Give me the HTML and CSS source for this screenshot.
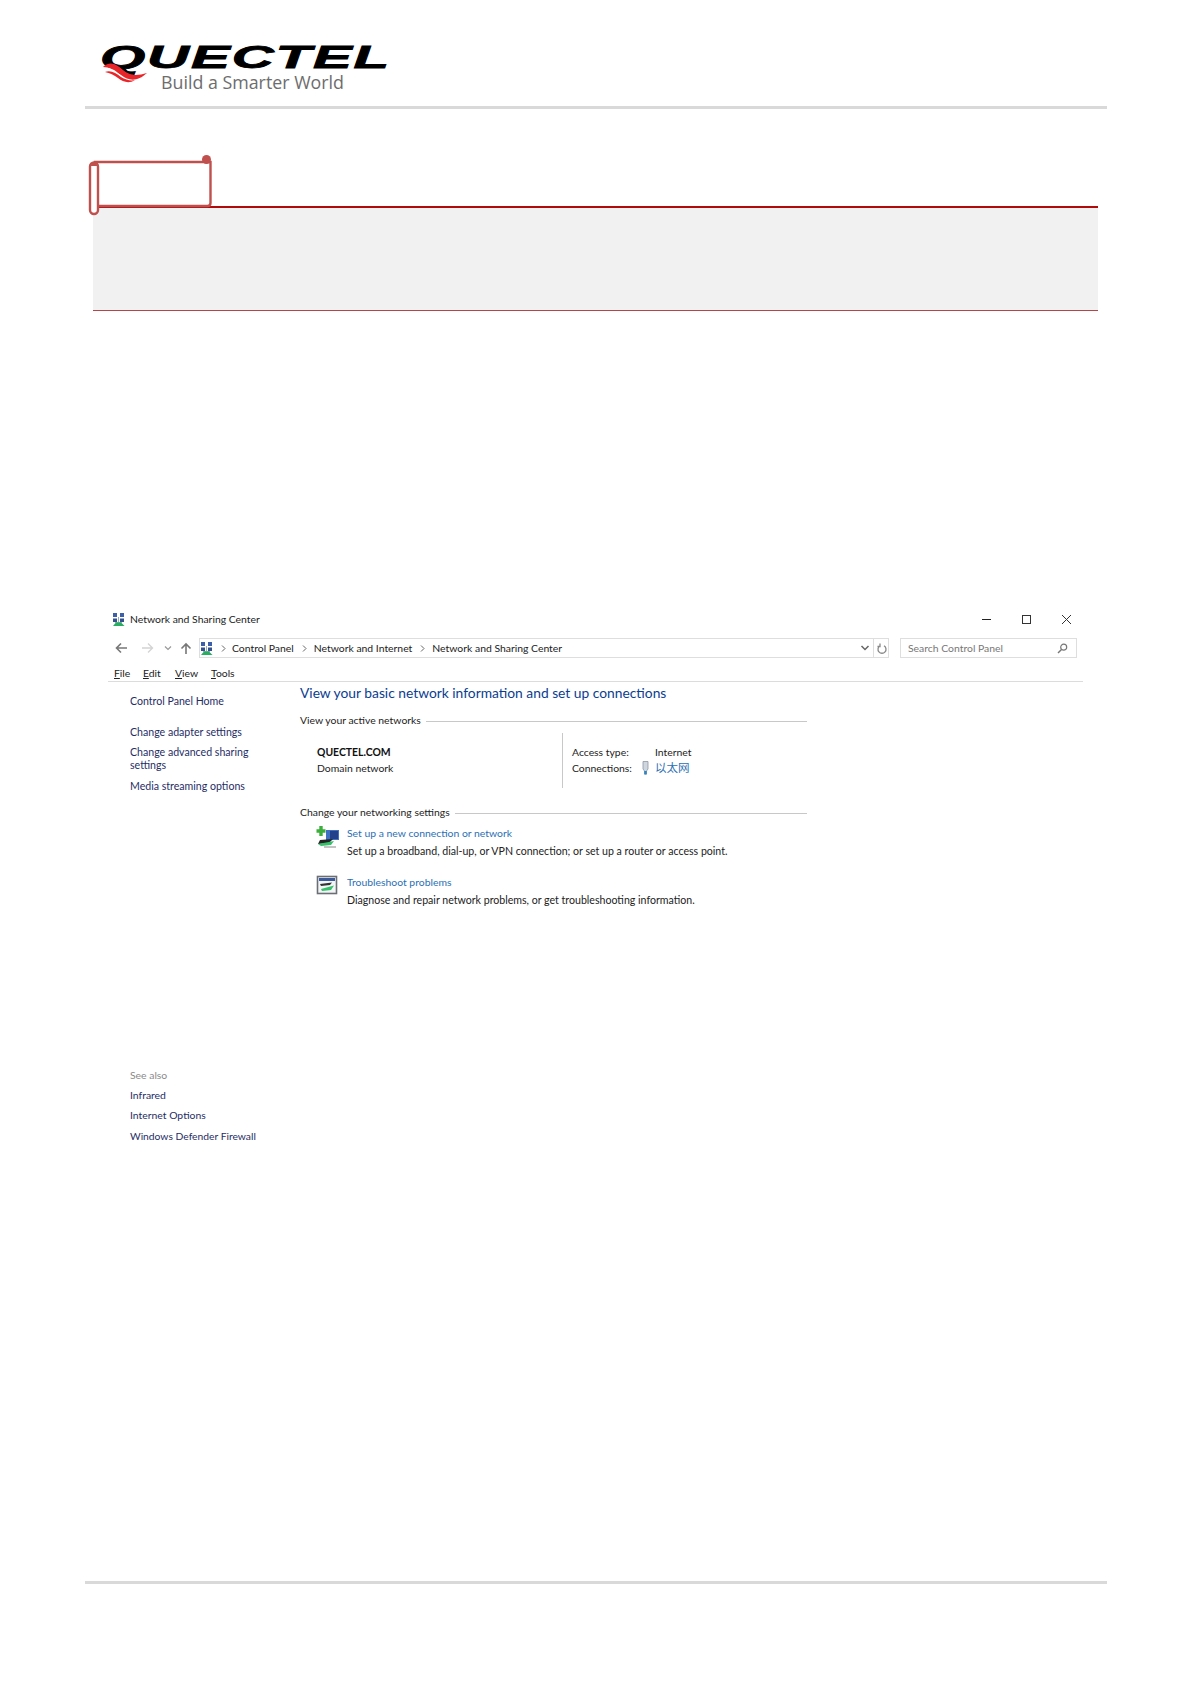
FILE: index.html
```html
<!DOCTYPE html>
<html lang="en">
<head>
<meta charset="utf-8">
<title>Network and Sharing Center</title>
<link rel="stylesheet" href="styles.css">
</head>
<body>
<div class="page">
  <header class="doc-header">
    <svg class="logo" width="310" height="60" viewBox="0 0 310 60" aria-label="Quectel">
      <text class="logo-word" x="15" y="37" textLength="291" lengthAdjust="spacingAndGlyphs">QUECTEL</text>
      <path d="M18 36 C26 29 32 34 38 39 C45 45 52 45 62 42 C52 51 44 50 36 44 C30 39 25 36 18 36Z" fill="#e8262a"/>
      <path d="M20 41 C26 39 31 42 36 46 C41 49 46 50 50 49 C44 53 38 51 33 47 C29 44 25 42 20 41Z" fill="#e8262a"/>
      <text class="logo-tag" x="76" y="58" textLength="183" lengthAdjust="spacingAndGlyphs">Build a Smarter World</text>
    </svg>
  </header>

  <section class="note">
    <svg class="scroll" width="126" height="60" viewBox="0 0 126 60" aria-hidden="true">
      <path d="M7 6H122.500V47Q122.500 50 119.500 50H7Z" fill="#fff" stroke="#c0504d" stroke-width="2.400"/>
      <circle cx="118.500" cy="3.500" r="4.500" fill="#c0504d"/>
      <rect x="2" y="6.500" width="8" height="51.500" rx="4" fill="#fff" stroke="#c0504d" stroke-width="2.400"/>
      <path d="M2.500 10Q6 2 9.500 10Z" fill="#c0504d"/>
    </svg>
  </section>

  <section class="window">
    <div class="title-row">
      <svg class="net-icon" width="14" height="15" viewBox="0 0 14 15" aria-hidden="true"><use href="#net"/></svg>
      <span class="title-text">Network and Sharing Center</span>
      <div class="win-buttons">
        <svg width="11" height="11" viewBox="0 0 11 11"><path d="M1 5.500H10" stroke="#222" stroke-width="1"/></svg>
        <svg width="11" height="11" viewBox="0 0 11 11"><rect x="1.500" y="1.500" width="8" height="8" fill="none" stroke="#333"/></svg>
        <svg width="11" height="11" viewBox="0 0 11 11"><path d="M1 1L10 10M10 1L1 10" stroke="#333"/></svg>
      </div>
    </div>

    <div class="nav-row">
      <div class="nav-arrows">
        <svg width="13" height="12" viewBox="0 0 13 12"><path d="M12 6H2M6 1.500L1.500 6L6 10.500" fill="none" stroke="#777" stroke-width="1.600"/></svg>
        <svg class="nav-forward" width="13" height="12" viewBox="0 0 13 12"><path d="M1 6H11M7 1.500L11.500 6L7 10.500" fill="none" stroke="#d4d4d4" stroke-width="1.400"/></svg>
        <svg class="nav-drop" width="8" height="8" viewBox="0 0 8 8"><path d="M1 2.500L4 5.500L7 2.500" fill="none" stroke="#999" stroke-width="1.200"/></svg>
        <svg class="nav-up" width="12" height="13" viewBox="0 0 12 13"><path d="M6 12V2M1.500 6.500L6 2L10.500 6.500" fill="none" stroke="#777" stroke-width="1.600"/></svg>
      </div>
      <div class="address">
        <svg class="net-icon" width="14" height="15" viewBox="0 0 14 15" aria-hidden="true">
          <g id="net">
            <rect x="1" y="1" width="4" height="4" fill="#3c5fa8"/><rect x="8" y="1" width="4" height="4" fill="#3c5fa8"/>
            <rect x="1" y="6.500" width="4" height="3.500" fill="#33508f"/><rect x="8" y="6.500" width="4" height="3.500" fill="#33508f"/>
            <path d="M6.500 5V10M3 10.500H10" stroke="#9ab" stroke-width="1"/>
            <path d="M1 14L4 10.500H9L12.500 14Z" fill="#27ae60"/>
          </g>
        </svg>
        <svg class="crumb-sep first-sep" width="5" height="7" viewBox="0 0 5 7"><path d="M1 0.500L4 3.500L1 6.500" fill="none" stroke="#666"/></svg><span class="crumb">Control Panel</span>
        <svg class="crumb-sep" width="5" height="7" viewBox="0 0 5 7"><path d="M1 0.500L4 3.500L1 6.500" fill="none" stroke="#666"/></svg><span class="crumb">Network and Internet</span>
        <svg class="crumb-sep" width="5" height="7" viewBox="0 0 5 7"><path d="M1 0.500L4 3.500L1 6.500" fill="none" stroke="#666"/></svg><span class="crumb">Network and Sharing Center</span>
        <div class="address-end">
          <svg width="10" height="8" viewBox="0 0 10 8"><path d="M1.500 2L5 5.500L8.500 2" fill="none" stroke="#666" stroke-width="1.500"/></svg>
          <div class="refresh"><svg width="10" height="11" viewBox="0 0 10 11"><path d="M3 2.800A4 4 0 1 0 7 2.800M3 0.500V3.500H0.500" fill="none" stroke="#888" stroke-width="1.300"/></svg></div>
        </div>
      </div>
      <div class="search">
        <span>Search Control Panel</span>
        <svg width="11" height="11" viewBox="0 0 11 11"><circle cx="6.700" cy="4.200" r="3" fill="none" stroke="#777" stroke-width="1.200"/><path d="M4.500 6.500L1 10" stroke="#777" stroke-width="1.500"/></svg>
      </div>
    </div>

    <nav class="menu-row">
      <span class="menu-a"><u>F</u>ile</span>
      <span class="menu-b"><u>E</u>dit</span>
      <span class="menu-c"><u>V</u>iew</span>
      <span class="menu-d"><u>T</u>ools</span>
    </nav>

    <div class="body-row">
      <aside class="sidebar">
        <a class="side-home">Control Panel Home</a>
        <a class="side-first">Change adapter settings</a>
        <a class="side-wrap">Change advanced sharing<br>settings</a>
        <a class="side-media">Media streaming options</a>
        <div class="see-also">See also</div>
        <a class="also-first">Infrared</a>
        <a class="also-item">Internet Options</a>
        <a class="also-last">Windows Defender Firewall</a>
      </aside>
      <main class="content">
        <h1 class="heading">View your basic network information and set up connections</h1>
        <div class="section-head first"><span>View your active networks</span></div>
        <div class="network">
          <div class="net-left">
            <div class="net-name">QUECTEL.COM</div>
            <div>Domain network</div>
          </div>
          <div class="net-right">
            <div class="net-line"><span class="net-label">Access type:</span><span>Internet</span></div>
            <div class="net-line">
              <span class="net-label">Connections:</span>
              <svg class="plug" width="9" height="14" viewBox="0 0 9 14" aria-hidden="true"><path d="M2 0.500H7V8L5.500 10V13H3.500V10L2 8Z" fill="#cfd6de" stroke="#8b98a6" stroke-width="0.800"/><rect x="3.300" y="10" width="2.400" height="3.500" fill="#2b86c5"/></svg>
              <a class="link cjk">以太网</a>
            </div>
          </div>
        </div>
        <div class="section-head second"><span>Change your networking settings</span></div>
        <div class="task task-one">
          <svg class="task-icon" width="24" height="24" viewBox="0 0 24 24" aria-hidden="true">
            <rect x="10" y="5" width="13" height="10" fill="#3f6fc0"/><rect x="14" y="6" width="8" height="8" fill="#22418a"/>
            <path d="M5 1V11M0.500 6H9.500" stroke="#3cae3c" stroke-width="3.400"/>
            <path d="M4 15L17 14L13 18L2 19Z" fill="#222"/>
            <path d="M2 19L18 16L15 20L5 21Z" fill="#35c06a"/>
            <path d="M8 22H20" stroke="#aaa" stroke-width="1.400"/>
          </svg>
          <div>
            <a class="link">Set up a new connection or network</a>
            <div class="task-desc">Set up a broadband, dial-up, or VPN connection; or set up a router or access point.</div>
          </div>
        </div>
        <div class="task task-two">
          <svg class="task-icon" width="24" height="24" viewBox="0 0 24 24" aria-hidden="true">
            <rect x="1.500" y="2.500" width="19" height="17" fill="#f2f4f6" stroke="#6b6f75" stroke-width="1.600"/>
            <rect x="3" y="4" width="16" height="3" fill="#3a5a9a"/>
            <path d="M4 10L16 8.500L14 11L5 12Z" fill="#333"/>
            <path d="M5 15L18 11.500L15 16L6 17Z" fill="#35c06a"/>
          </svg>
          <div>
            <a class="link">Troubleshoot problems</a>
            <div class="task-desc">Diagnose and repair network problems, or get troubleshooting information.</div>
          </div>
        </div>
      </main>
    </div>
  </section>

  <footer class="doc-footer"></footer>
</div>
</body>
</html>
```

FILE: styles.css
```css
* { box-sizing: border-box; }
html, body { margin: 0; padding: 0; background: #fff; }
body { font-family: Lato, "Noto Sans CJK SC", sans-serif; font-size: 10.4px; color: #222; }
.page { height: 1684px; display: flex; flex-direction: column; overflow: hidden; }

.doc-header { margin: 0 84px 0 85px; height: 109px; border-bottom: 3px solid #d9d9d9; padding-top: 31px; }
.logo { display: block; overflow: visible; }
.logo-word { font-family: "Liberation Sans", sans-serif; font-weight: 700; font-style: italic; font-size: 31px; letter-spacing: 1px; fill: #000; stroke: #000; stroke-width: 0.8px; }
.logo-tag { font-family: "Open Sans", sans-serif; font-size: 18px; fill: #6d6d6d; }

.note { position: relative; margin: 97px 93px 0 93px; height: 105px; background: #f1f1f1; border-top: 2px solid #b00a0a; border-bottom: 1px solid #b5454a; }
.scroll { position: absolute; left: -5px; top: -52px; overflow: visible; }

.window { margin: 296px 108px 0 108px; }
.title-row { height: 24px; display: flex; align-items: center; padding-left: 4px; }
.net-icon { flex: none; }
.title-text { margin-left: 4px; }
.win-buttons { margin-left: auto; display: flex; gap: 29px; padding-right: 11px; }

.nav-row { margin-top: 7px; height: 20px; display: flex; align-items: center; }
.nav-arrows { width: 91px; display: flex; align-items: center; padding-left: 7px; flex: none; }
.nav-forward { margin-left: 13px; }
.nav-drop { margin-left: 10px; }
.nav-up { margin-left: 8px; }
.address { width: 690px; height: 20px; border: 1px solid #dedede; display: flex; align-items: center; flex: none; }
.crumb-sep { margin: 0 7px 0 8px; flex: none; }
.first-sep { margin: 0 6px 0 7px; }
.crumb { white-space: nowrap; margin-top: -1px; }
.address-end { margin-left: auto; display: flex; align-items: center; height: 18px; gap: 3px; }
.refresh { display: flex; align-items: center; height: 18px; padding: 0 1px 0 3px; border-left: 1px solid #dedede; }
.search { width: 177px; height: 20px; margin-left: 11px; border: 1px solid #dedede; display: flex; align-items: center; justify-content: space-between; padding: 0 8px 0 7px; color: #777; flex: none; }

.menu-row { height: 24px; border-bottom: 1px solid #dcdcdc; display: flex; align-items: flex-end; padding: 0 0 0 6px; line-height: 16px; }
.menu-a { width: 29px; } .menu-b { width: 32px; } .menu-c { width: 36px; }

.body-row { display: flex; }
.sidebar { width: 192px; padding-left: 22px; display: flex; flex-direction: column; flex: none; color: #1f2d66; font-size: 10.6px; line-height: 16px; align-items: flex-start; }
.side-home { margin-top: 11px; }
.side-first { margin-top: 15px; }
.side-wrap { margin-top: 6px; line-height: 13px; }
.side-media { margin-top: 6px; }
.see-also { margin-top: 273px; color: #8a8a8a; font-size: 10.4px; }
.also-first { margin-top: 4px; font-size: 10.4px; }
.also-item { margin-top: 4px; font-size: 10.4px; }
.also-last { margin-top: 5px; font-size: 10.3px; }

.content { width: 507px; }
.heading { margin: 0; font-size: 13.8px; font-weight: 400; line-height: 22px; color: #0a3d91; white-space: nowrap; }
.section-head { display: flex; align-items: center; line-height: 16px; gap: 5px; height: 16px; }
.section-head::after { content: ""; flex: 1; border-top: 1px solid #c8c8c8; margin-top: 2px; }
.first { margin-top: 8px; }
.second { margin-top: 16px; }
.network { display: flex; margin-top: 5px; height: 55px; line-height: 16px; }
.net-left { width: 262px; padding: 11px 0 0 17px; flex: none; }
.net-name { font-weight: 700; color: #111; }
.net-right { border-left: 1px solid #c8c8c8; padding: 11px 0 0 9px; }
.net-line { display: flex; align-items: center; height: 16px; }
.net-label { width: 83px; flex: none; white-space: nowrap; }
.plug { margin-left: -14px; margin-right: 5px; }
.link { color: #2b6fb5; }
.cjk { font-size: 11.500px; }
.task { display: flex; line-height: 17px; }
.task-one { margin-top: 5px; }
.task-two { margin-top: 14px; }
.task-icon { margin: 0 7px 0 16px; flex: none; }
.task-desc { white-space: nowrap; font-size: 10.6px; margin-top: 1px; }

.doc-footer { margin: auto 84px 100px 85px; border-top: 3px solid #d9d9d9; }
```
